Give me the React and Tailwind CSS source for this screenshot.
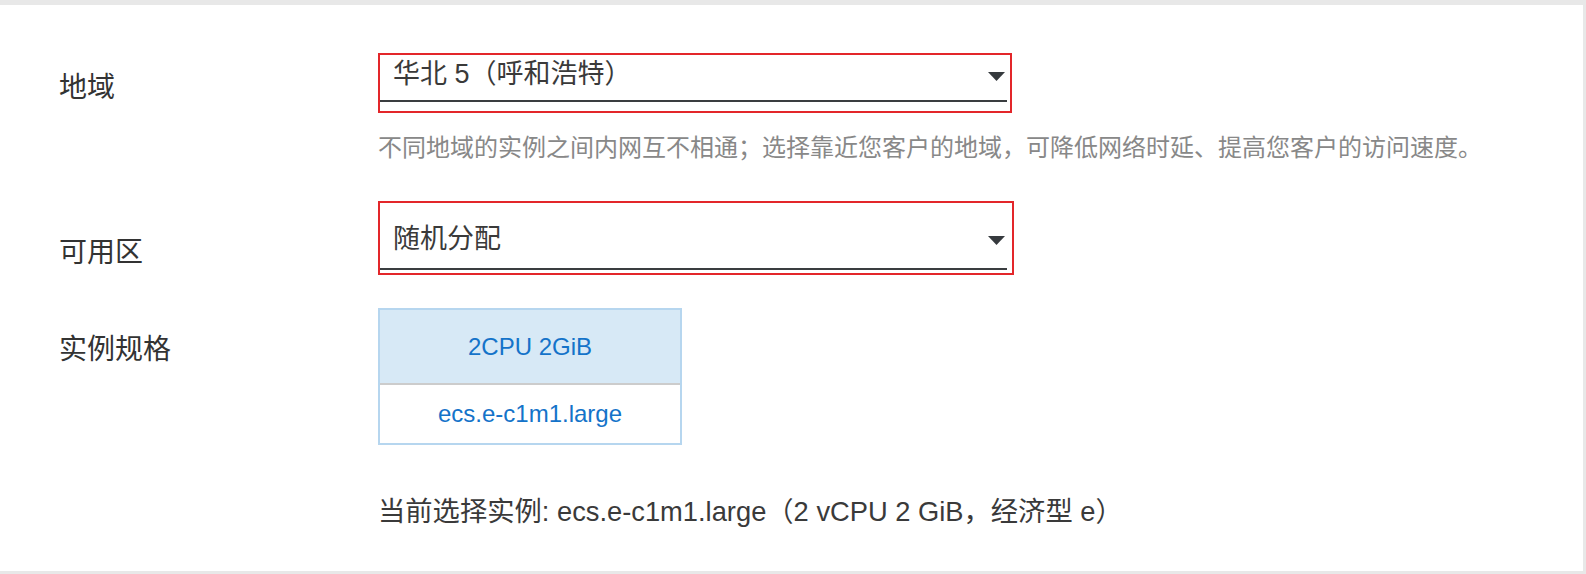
import React from "react";

function Caret() {
  return (
    <svg width="17" height="9" viewBox="0 0 17 9" className="shrink-0">
      <path d="M0 0 H17 L8.5 9 Z" fill="#363a3e" />
    </svg>
  );
}

function Label({ children, className = "" }) {
  return (
    <div className={`w-[319px] shrink-0 text-[28px] leading-[36px] text-[#333333] ${className}`}>
      {children}
    </div>
  );
}

export default function App() {
  return (
    <div className="h-[574px] w-[1586px] bg-[#e8e8e8] pt-[5px] pr-[3px] pb-[3px] font-['Liberation_Sans','Noto_Sans_CJK_SC',sans-serif]">
      <div className="h-full bg-white pl-[59px]">
        {/* region */}
        <div className="flex items-start pt-[48px]">
          <Label className="mt-[17px]">地域</Label>
          <div>
            <div className="w-[634px] h-[60px] border-2 border-[#e3262a]">
              <div className="mr-[3px] border-b-2 border-[#3a3d40]">
                <div className="flex items-center justify-between pl-[13px] pr-[2px] pt-[3px] pb-[10px]">
                  <span className="text-[27px] leading-[32px] text-[#3a3a3a]">华北 5（呼和浩特）</span>
                  <span className="mt-[4px]">
                    <Caret />
                  </span>
                </div>
              </div>
            </div>
            <p className="mt-[19px] text-[24px] leading-[32px] text-[#888888]">
              不同地域的实例之间内网互不相通；选择靠近您客户的地域，可降低网络时延、提高您客户的访问速度。
            </p>
          </div>
        </div>

        {/* zone */}
        <div className="flex items-start mt-[37px]">
          <Label className="mt-[34px]">可用区</Label>
          <div className="w-[636px] h-[74px] border-2 border-[#e3262a]">
            <div className="mr-[5px] border-b-2 border-[#3a3d40]">
              <div className="flex items-center justify-between pl-[13px] pr-[2px] pt-[20px] pb-[13px]">
                <span className="text-[27px] leading-[32px] text-[#3a3a3a]">随机分配</span>
                <span className="mt-[2px]">
                  <Caret />
                </span>
              </div>
            </div>
          </div>
        </div>

        {/* instance type */}
        <div className="flex items-start mt-[33px]">
          <Label className="mt-[24px]">实例规格</Label>
          <div>
            <div className="w-[304px] border-2 border-[#b6d6ef] text-[24px] text-[#1473c9]">
              <div className="h-[75px] flex items-center justify-center bg-[#d7e9f6] border-b-2 border-[#cccccc]">
                2CPU 2GiB
              </div>
              <div className="h-[58px] flex items-center justify-center bg-white">
                ecs.e-c1m1.large
              </div>
            </div>
            <p className="mt-[49px] text-[27.3px] leading-[36px] text-[#3a3a3a] whitespace-nowrap">
              当前选择实例: ecs.e-c1m1.large（2 vCPU 2 GiB，经济型 e）
            </p>
          </div>
        </div>
      </div>
    </div>
  );
}
